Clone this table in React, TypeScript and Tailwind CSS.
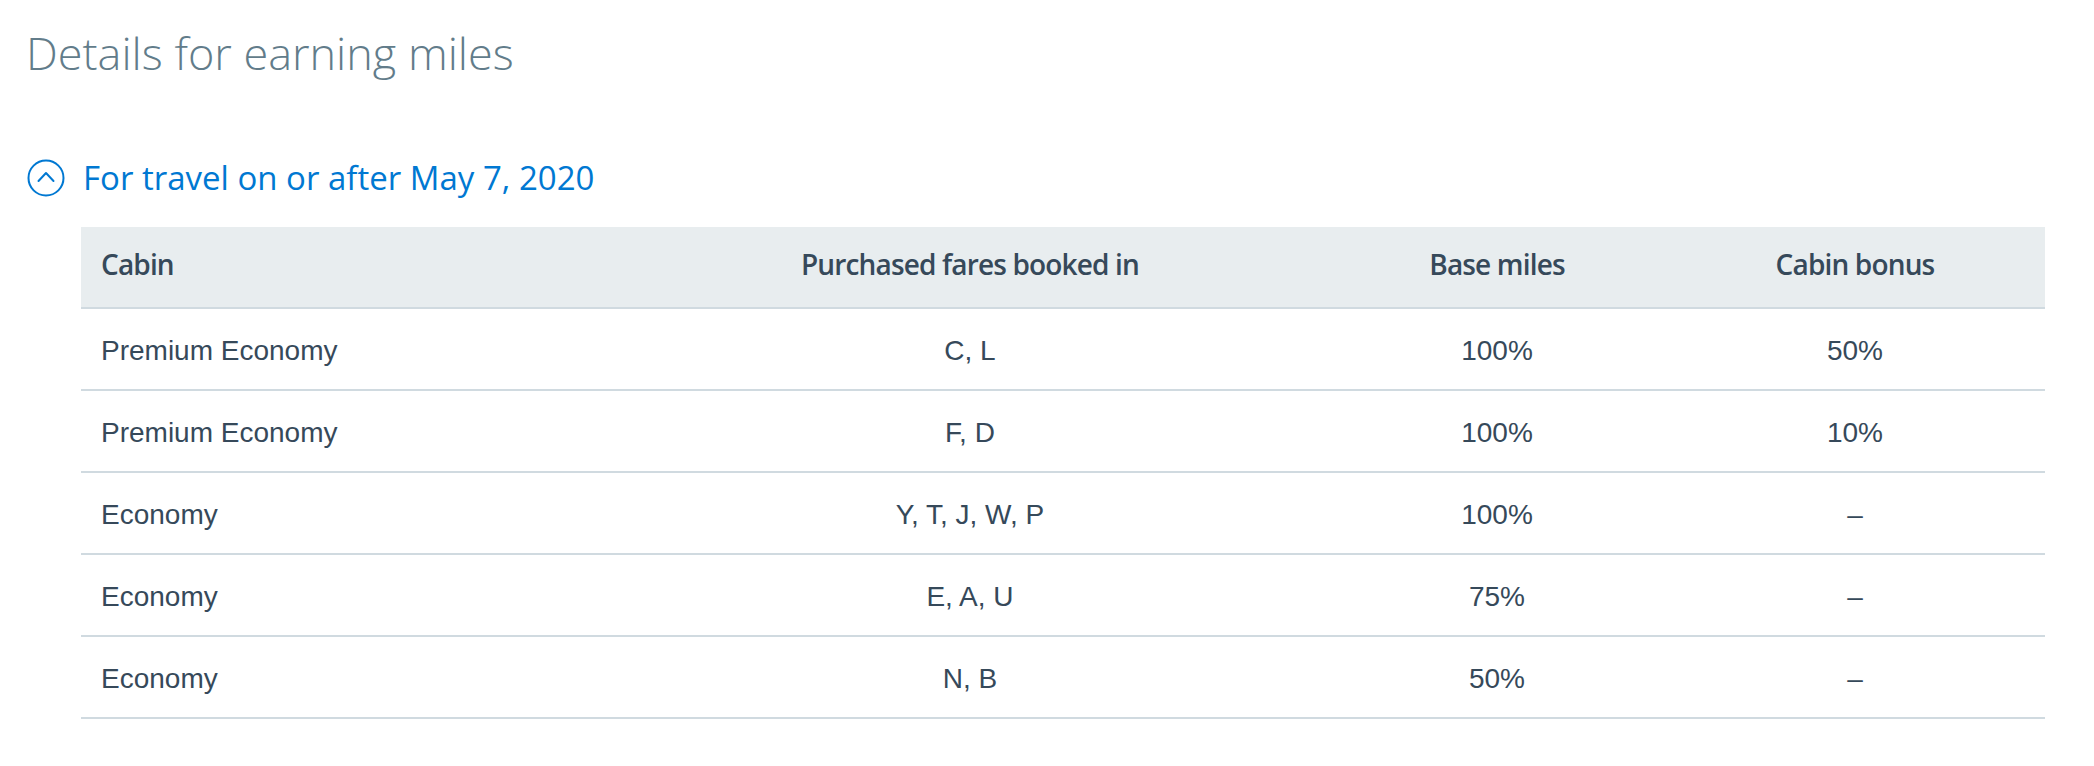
const rows = [
  { cabin: "Premium Economy", fares: "C, L", base: "100%", bonus: "50%" },
  { cabin: "Premium Economy", fares: "F, D", base: "100%", bonus: "10%" },
  { cabin: "Economy", fares: "Y, T, J, W, P", base: "100%", bonus: "–" },
  { cabin: "Economy", fares: "E, A, U", base: "75%", bonus: "–" },
  { cabin: "Economy", fares: "N, B", base: "50%", bonus: "–" },
];

const cols = "grid grid-cols-[530px_718px_336px_380px]";

const CollapseIcon = () => (
  <svg width="38" height="38" viewBox="0 0 38 38" fill="none" className="shrink-0">
    <circle cx="19" cy="19" r="17.5" stroke="#0078d2" strokeWidth="2" />
    <polyline
      points="11.5,22 19,14 26.5,22"
      stroke="#0078d2"
      strokeWidth="2"
      strokeLinecap="round"
      strokeLinejoin="round"
    />
  </svg>
);

export default function App() {
  return (
    <div className="min-h-[766px] bg-white pl-[26px] pt-[30px]">
      <h1 className="font-['Open_Sans',sans-serif] text-[45px] font-light leading-[45px] text-[#627c8a]">
        Details for earning miles
      </h1>

      <div className="mt-[84px] flex items-center gap-[18px] pl-px">
        <CollapseIcon />
        <span className="font-['Open_Sans',sans-serif] text-[33px] leading-[38px] text-[#0078d2]">
          For travel on or after May 7, 2020
        </span>
      </div>

      <div className="ml-[55px] mt-[30px] w-[1964px] text-[#36495a]">
        <div
          className={`${cols} h-[82px] border-b-2 border-[#d0dae0] bg-[#e8edef] pb-[6px] font-['Open_Sans',sans-serif] text-[28px] font-semibold leading-[28px] tracking-[-0.03em]`}
        >
          <div className="flex items-center pl-[20px]">Cabin</div>
          <div className="flex items-center justify-center">Purchased fares booked in</div>
          <div className="flex items-center justify-center">Base miles</div>
          <div className="flex items-center justify-center">Cabin bonus</div>
        </div>

        {rows.map((r, i) => (
          <div
            key={i}
            className={`${cols} h-[82px] border-b-2 border-[#d0dae0] pt-[4px] font-['Liberation_Sans',Arial,sans-serif] text-[28px] leading-[28px]`}
          >
            <div className="flex items-center pl-[20px]">{r.cabin}</div>
            <div className="flex items-center justify-center">{r.fares}</div>
            <div className="flex items-center justify-center">{r.base}</div>
            <div className="flex items-center justify-center">{r.bonus}</div>
          </div>
        ))}
      </div>
    </div>
  );
}
